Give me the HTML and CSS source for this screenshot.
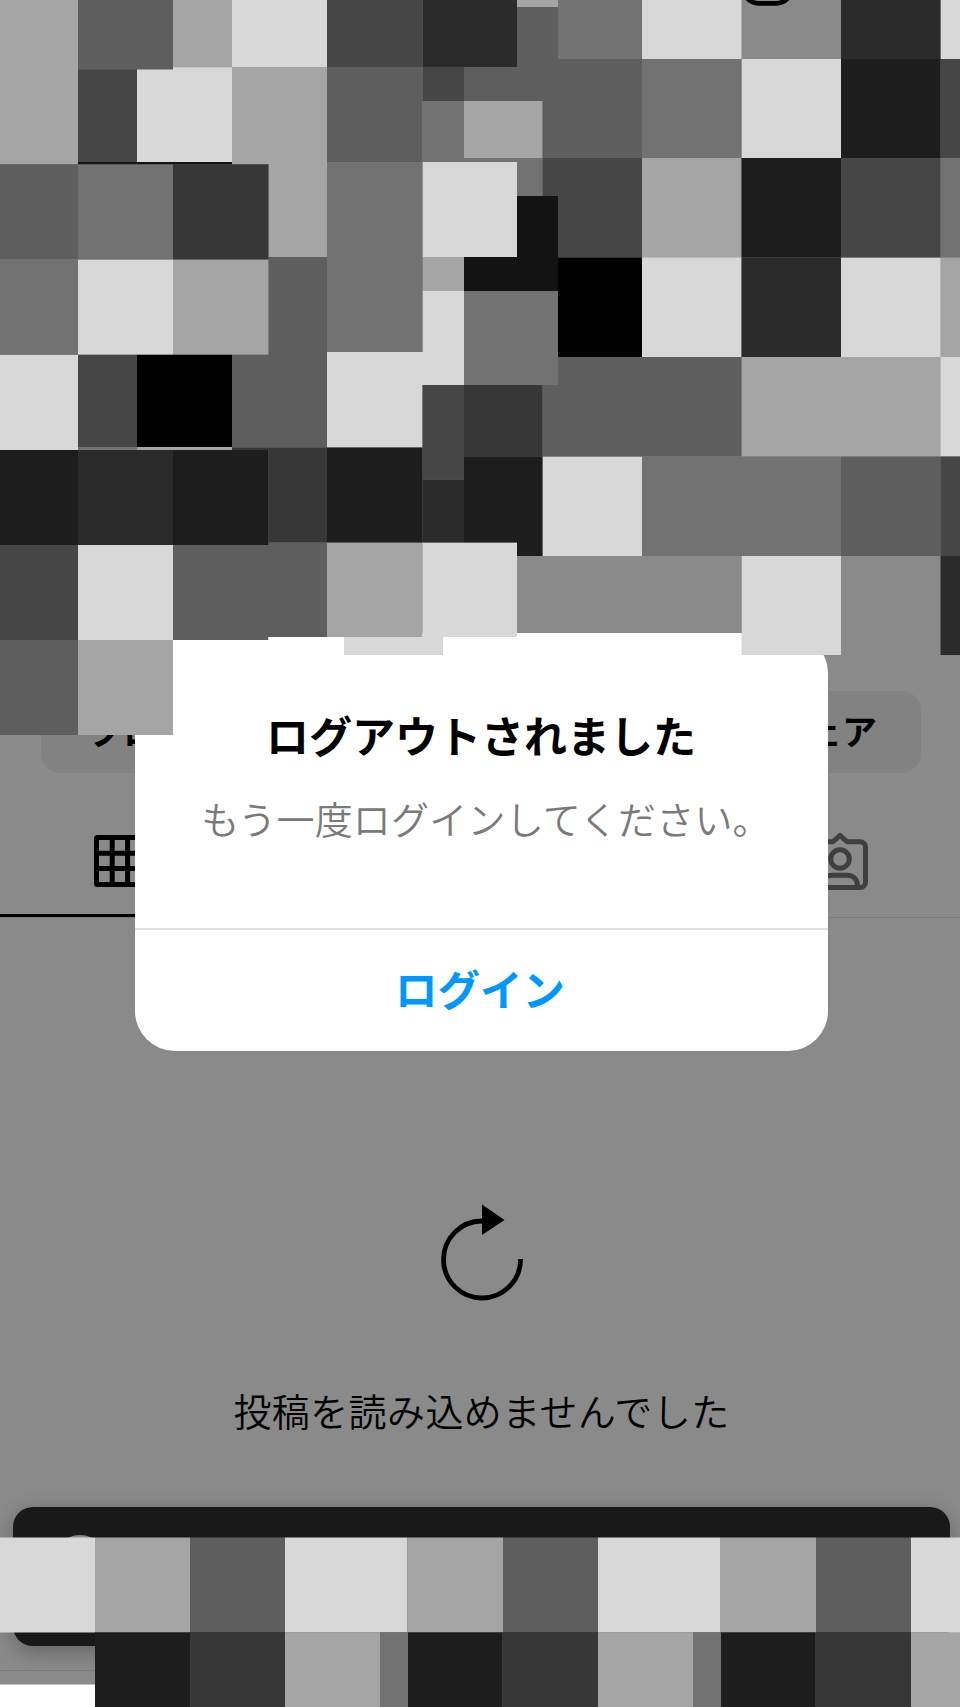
FILE: index.html
```html
<!DOCTYPE html>
<html lang="ja">
<head>
<meta charset="utf-8">
<title>ログアウトされました</title>
<link rel="stylesheet" href="styles.css">
</head>
<body>
<div class="screen">
  <svg class="header-icon" width="53" height="8" viewBox="0 0 53 8"><rect x="2.500" y="-38" width="48" height="41.300" rx="15" fill="none" stroke="#000" stroke-width="4.800"/></svg>
  <main class="profile">
    <div class="actions">
      <div class="action action-edit">プロ</div>
      <div class="action action-share">シェア</div>
    </div>
    <div class="tabs">
      <div class="tab tab-active">
        <svg width="52" height="52" viewBox="0 0 52 52" fill="none" stroke="#000" stroke-width="5"><rect x="2.5" y="2.5" width="47" height="47" rx="1"/><path d="M18.2 2v48M33.6 2v48M2 18.2h48M2 33.6h48"/></svg>
      </div>
      <div class="tab tab-tagged">
        <svg width="58" height="58" viewBox="0 0 58 58" fill="none" stroke="#3f3f3f" stroke-width="5" stroke-linejoin="round"><path d="M9 8.700H22l7-6.200 7 6.200h13a5.500 5.500 0 0 1 5.500 5.500V49a5.500 5.500 0 0 1-5.500 5.500H9A5.500 5.500 0 0 1 3.500 49V14.200A5.500 5.500 0 0 1 9 8.700Z"/><circle cx="29" cy="26" r="9.300"/><path d="M10 53c0-7 5-10.800 11-10.800h15c6 0 10.500 4 10.500 10.800"/></svg>
      </div>
    </div>
    <div class="error">
      <svg width="82" height="98" viewBox="0 0 82 98"><path d="M41 17A38.500 38.500 0 1 0 79.500 55" fill="none" stroke="#000" stroke-width="4.800"/><path d="M41 .500l22.500 15.500L41 31Z"/></svg>
      <p class="error-text">投稿を読み込めませんでした</p>
    </div>
    <div class="toast"><span class="avatar"></span></div>
    <div class="footer-line"></div>
  </main>

  <div class="dialog">
    <div class="dialog-body">
      <h1 class="dialog-title">ログアウトされました</h1>
      <p class="dialog-message">もう一度ログインしてください。</p>
    </div>
    <div class="dialog-button">ログイン</div>
  </div>

  <svg class="mosaic" width="960" height="1707" viewBox="0 0 960 1707">
    <g fill="#a5a5a5">
      <path d="M0 0H78V164H0ZM173 0H232V67.300H173ZM517 0H558V7H517ZM232 67H327V164.500H232ZM464 101H542.500V158H464ZM642 158H741.500V257.500H642ZM268.500 162H327V257H268.500ZM940.500 257.500H960V357H940.500ZM422.500 257H464V291H422.500ZM173 259.500H268.500V354.700H173ZM741.500 357H940.500V456.500H741.500ZM137 447H232V450H137ZM327 542.500H422.500V637H327ZM78 640H173V735H78Z"/>
      <path d="M95 1537.500H190V1632.500H95ZM407.500 1537.500H503V1632.500H407.500ZM720 1537.500H816V1632.500H720ZM285 1632.500H380V1707H285ZM598 1632.500H693V1707H598ZM911 1632.500H960V1707H911Z"/>
    </g>
    <g fill="#d8d8d8">
      <path d="M232 0H327V67H232ZM642 0H741.500V59H642ZM940.500 0H960V59H940.500ZM137 69.500H173V67.300H232V162H137ZM741.500 59H841V158H741.500ZM422.500 162H517V257H422.500ZM642 257.500H741.500V357H642ZM841 257.500H940.500V357H841ZM422.500 291H464V385H422.500ZM78 259.500H173V354.700H78ZM0 354.700H78V450H0ZM327 352H422.500V447.500H327ZM940.500 357H960V456.500H940.500ZM542.500 456.500H642V556H542.500ZM78 545H173V640H78ZM422.500 542.500H517V637H443V655H344V637H422.500ZM741.500 556H841V655H741.500Z"/>
      <path d="M0 1537.500H95V1632.500H0ZM285 1537.500H407.500V1632.500H285ZM598 1537.500H720V1632.500H598ZM911 1537.500H960V1632.500H911Z"/>
    </g>
    <g fill="#5e5e5e">
      <path d="M78 0H173V69.300H78ZM517 7H558V59H642V158H542.500V101H464V67H517ZM327 67H422.500V162.300H327ZM0 164.300H78V259.500H0ZM268.500 257H327V352H268.500ZM232 354.700H268.500V352H327V447.500H232ZM542.500 385H558V357H741.500V456.500H542.500ZM841 456.500H940.500V556H841ZM173 545H268.500V542.500H327V637H268.500V640H173ZM0 640H78V735H0Z"/>
      <path d="M190 1537.500H285V1632.500H190ZM503 1537.500H598V1632.500H503ZM816 1537.500H911V1632.500H816Z"/>
    </g>
    <g fill="#727272">
      <path d="M558 0H642V59H558ZM422.500 101H464V158H542.500V196H517V162H422.500ZM642 59H741.500V158H642ZM940.500 158H960V257.500H940.500ZM78 164.300H173V259.500H78ZM327 162.300H422.500V352H327ZM464 291H558V385H464ZM0 259.500H78V354.700H0ZM642 456.500H841V556H642ZM78 447H137V450H78Z"/>
      <path d="M380 1632.500H408V1707H380ZM693 1632.500H721V1707H693Z"/>
    </g>
    <path fill="#464646" d="M327 0H422.500V67H327ZM78 69.300H137V162H78ZM422.500 67H464V101H422.500ZM940.500 59H960V158H940.500ZM542.500 158H642V257.500H558V196H542.500ZM841 158H940.500V257.500H841ZM78 354.700H137V447H78ZM422.500 385H464V479.500H422.500ZM940.500 456.500H960V556H940.500ZM0 545H78V640H0Z"/>
    <path fill="#373737" d="M173 164.300H268.500V259.500H173ZM464 385H542.500V457H464ZM232 447.500H327V542.500H268.500V450H232ZM190 1632.500H285V1707H190ZM502 1632.500H598V1707H502ZM815 1632.500H911V1707H815Z"/>
    <path fill="#2b2b2b" d="M422.500 0H517V67H422.500ZM841 0H940.500V59H841ZM741.500 257.500H841V357H741.500ZM78 450H173V545H78ZM422.500 479.500H464V542.500H422.500ZM940.500 556H960V655H940.500Z"/>
    <path fill="#1d1d1d" d="M841 59H940.500V158H841ZM741.500 158H841V257.500H741.500ZM0 450H78V545H0ZM173 450H268.500V545H173ZM327 447.500H422.500V542.500H327ZM464 457H542.500V556H517V542.500H464ZM95 1632.500H190V1707H95ZM408 1632.500H502V1707H408ZM721 1632.500H815V1707H721Z"/>
    <path fill="#131313" d="M517 196H558V291H464V257H517ZM78 162H232V164.300H78Z"/>
    <path fill="#000" d="M558 257.500H642V357H558ZM137 354.700H232V447H137Z"/>
    <path fill="#8a8a8a" d="M517 556H741.500V633H517Z"/>
    <path fill="#fff" d="M0 1684.500H95V1707H0ZM173 640H268.500V637H344V655H173Z"/>
  </svg>
</div>
</body>
</html>
```
FILE: styles.css
```css
* {
  box-sizing: border-box;
}

body {
  margin: 0;
  background: #8a8a8a;
  font-family: "Noto Sans CJK JP", sans-serif;
  color: #000;
}

.screen {
  position: relative;
  width: 960px;
  height: 1707px;
  overflow: hidden;
  background: #8a8a8a;
}

.header-icon {
  position: absolute;
  left: 741px;
  top: 0;
}

.profile {
  display: flex;
  flex-direction: column;
  padding-top: 691px;
}

.actions {
  display: flex;
  gap: 10px;
  margin: 0 39px 0 41px;
}

.action {
  flex: 1;
  height: 82px;
  border-radius: 20px;
  background: #828282;
  font-size: 35px;
  font-weight: 700;
  line-height: 77px;
}

.action-edit {
  padding-left: 47px;
}

.action-share {
  padding-right: 44px;
  text-align: right;
}

.tabs {
  display: flex;
  height: 145px;
  border-bottom: 1px solid #7a7a7a;
}

.tab {
  display: flex;
  flex: 1;
  height: 144px;
}

.tab-active {
  flex: 0 0 240px;
  padding: 62px 0 0 94px;
  border-bottom: 3px solid #000;
}

.tab-tagged {
  justify-content: flex-end;
  padding: 60px 91px 0 0;
}

.error {
  display: flex;
  flex-direction: column;
  align-items: center;
  height: 589px;
  padding: 286px 0 0 3px;
}

.error-text {
  margin: 80px 0 0;
  font-size: 38px;
  font-weight: 350;
  letter-spacing: 0.4px;
  line-height: 56px;
  white-space: nowrap;
}

.toast {
  height: 139px;
  margin: 0 10px 0 13px;
  padding: 28px 0 0 39px;
  border-radius: 20px;
  background: #191919;
  box-shadow: 0 6px 22px rgba(0, 0, 0, 0.28);
}

.avatar {
  display: block;
  width: 56px;
  height: 56px;
  border-radius: 50%;
  background: #8a8a8a;
}

.footer-line {
  height: 1px;
  margin-top: 24px;
  background: #7a7a7a;
}

.dialog {
  position: absolute;
  left: 134.5px;
  top: 633px;
  width: 693px;
  height: 418px;
  border-radius: 40px;
  background: #fff;
  text-align: center;
  white-space: nowrap;
}

.dialog-body {
  height: 297px;
  padding-top: 70px;
  border-bottom: 2px solid #e0e0e0;
}

.dialog-title {
  margin: 0;
  font-size: 43px;
  font-weight: 700;
  line-height: 62px;
}

.dialog-message {
  margin: 25px 0 0;
  padding-left: 10px;
  font-size: 38px;
  font-weight: 350;
  letter-spacing: 0.2px;
  line-height: 56px;
  color: #7a7a7a;
}

.dialog-button {
  padding-right: 2px;
  font-size: 42.5px;
  font-weight: 700;
  line-height: 115px;
  color: #0098fd;
}

.mosaic {
  position: absolute;
  left: 0;
  top: 0;
}
```
